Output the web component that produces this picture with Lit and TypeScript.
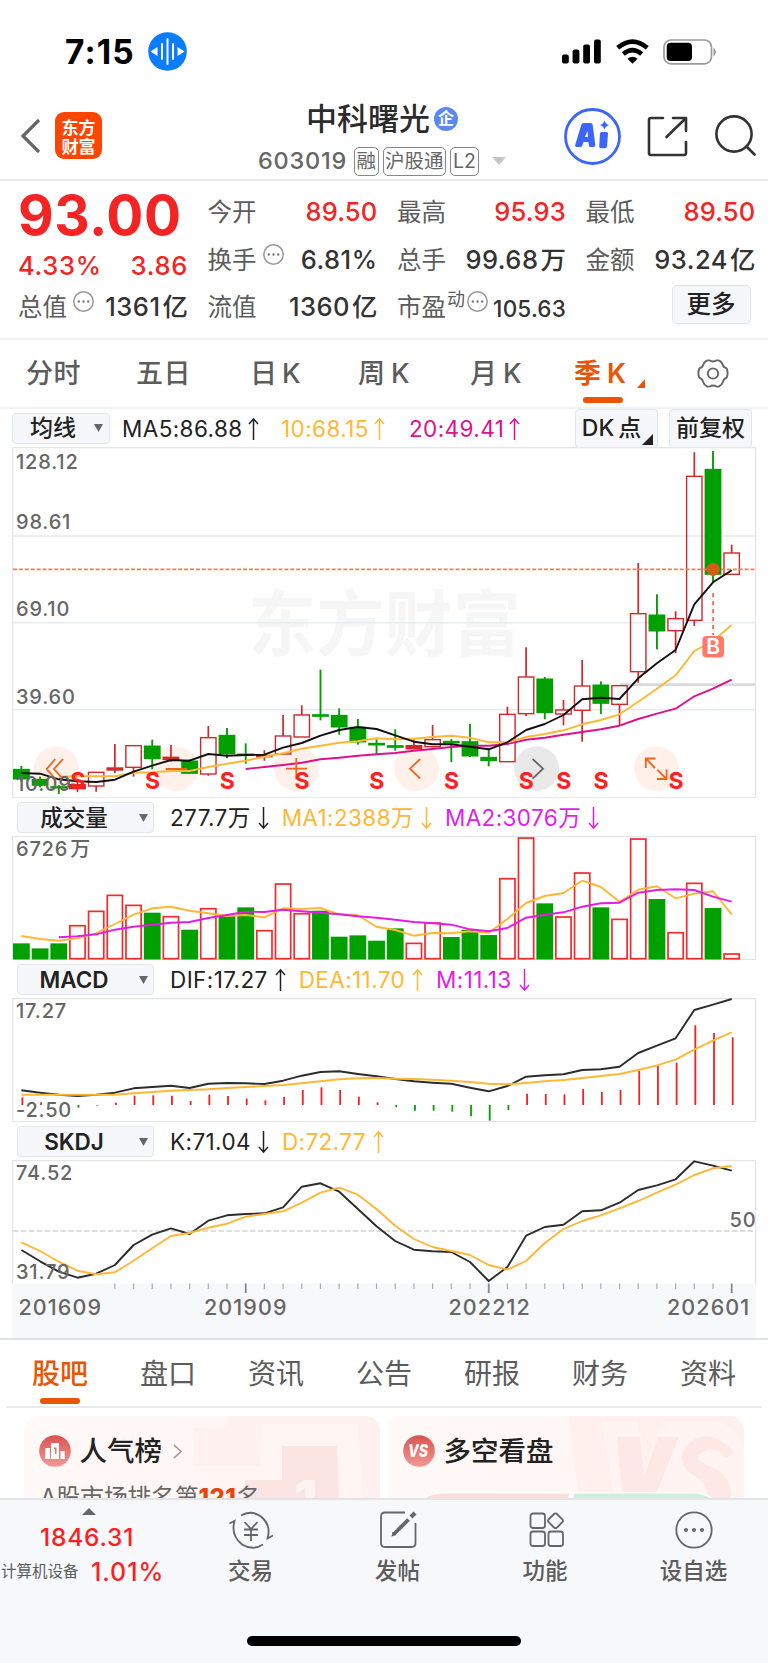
import { LitElement, html, svg, css } from "lit";
import { customElement, property } from "lit/decorators.js";

const RED = "#d2282d";
const GREEN = "#00a000";
const X0 = 21.4;
const STEP = 18.692;
const xAt = (i: number) => X0 + STEP * i;

/* Turns samples (in third-pixels below `base`) into polyline points. */
const line = (vals: number[], base: number, start = 0) =>
  vals.map((v, k) => `${xAt(k + start).toFixed(1)},${(base + v / 3).toFixed(1)}`).join(" ");

type Candle = [number, number, number, number, number];
/* up?, high, body top, body bottom, low */
const CANDLES: Candle[] = [
  [0, 978, 988, 1017, 1025], [0, 1010, 1018, 1036, 1042], [0, 1035, 1040, 1044, 1062],
  [1, 1020, 1034, 1046, 1057], [1, 996, 997, 1038, 1055], [1, 912, 984, 990, 1000],
  [1, 917, 917, 982, 1010], [0, 899, 918, 956, 988], [1, 915, 952, 958, 965],
  [0, 958, 963, 1000, 1000], [1, 858, 893, 1002, 1007], [0, 864, 886, 941, 955],
  [0, 910, 942, 946, 971], [1, 931, 946, 950, 962], [1, 825, 888, 942, 942],
  [1, 796, 825, 891, 891], [0, 689, 824, 829, 841], [0, 805, 826, 861, 884],
  [0, 837, 862, 906, 914], [0, 898, 910, 915, 943], [0, 868, 917, 922, 932],
  [1, 897, 917, 926, 928], [1, 855, 899, 920, 922], [0, 897, 904, 909, 966],
  [0, 852, 905, 948, 951], [0, 925, 952, 962, 979], [1, 800, 823, 965, 965],
  [1, 622, 711, 821, 828], [0, 711, 717, 818, 838], [1, 780, 810, 822, 856],
  [1, 660, 738, 811, 905], [0, 724, 735, 790, 822], [1, 737, 737, 793, 856],
  [1, 369, 521, 695, 728], [0, 463, 525, 573, 628], [1, 514, 536, 572, 640],
  [1, 37, 109, 541, 558], [0, 33, 88, 403, 428], [1, 314, 339, 403, 403],
];
const MA5 = [999, 1001, 1018, 1024, 1026, 1019, 995, 977, 960, 962, 942, 947, 945, 944, 923, 909, 887, 870, 861, 867, 886, 905, 913, 913, 920, 928, 907, 870, 852, 825, 778, 773, 777, 715, 670, 630, 493, 427, 391];
const MA10 = [1010, 1009, 1009, 1009, 998, 997, 993, 993, 981, 971, 962, 950, 940, 926, 917, 908, 904, 895, 898, 896, 891, 887, 893, 907, 907, 891, 882, 871, 853, 840, 823, 785, 746, 706, 633, 603, 555];
const MA20 = [987, 981, 975, 968, 958, 953, 947, 943, 939, 932, 927, 921, 917, 917, 912, 899, 893, 884, 876, 868, 857, 837, 821, 806, 769, 746, 719];
const VOL = [431, 446, 431, 375, 332, 284, 314, 339, 348, 390, 324, 348, 323, 390, 250, 339, 333, 411, 407, 423, 386, 428, 367, 412, 390, 406, 234, 112, 311, 349, 217, 323, 356, 115, 298, 396, 248, 325, 460];
const VOL_UP = new Set([3, 4, 5, 6, 8, 10, 13, 14, 15, 21, 22, 26, 27, 29, 30, 32, 33, 35, 36, 38]);
const VMA1 = [408, 417, 422, 415, 400, 372, 344, 325, 320, 332, 340, 348, 345, 352, 325, 327, 324, 343, 346, 380, 390, 407, 399, 400, 394, 398, 357, 309, 288, 279, 242, 261, 305, 269, 259, 295, 281, 274, 343];
const VMA2 = [412, 409, 403, 389, 380, 374, 368, 366, 354, 345, 335, 336, 329, 334, 338, 343, 349, 353, 359, 366, 370, 374, 388, 394, 384, 353, 344, 337, 320, 310, 308, 278, 270, 268, 270, 290, 305];
const DIF = [871, 878, 884, 888, 884, 878, 865, 861, 857, 864, 851, 849, 850, 852, 842, 827, 816, 814, 822, 829, 837, 844, 848, 851, 863, 874, 858, 830, 826, 823, 810, 808, 800, 759, 737, 715, 630, 614, 597];
const DEA = [884, 884, 884, 884, 884, 884, 880, 876, 872, 870, 868, 864, 861, 858, 855, 850, 844, 838, 835, 834, 836, 837, 839, 842, 846, 851, 853, 849, 844, 840, 834, 828, 822, 810, 796, 779, 749, 722, 697];
const HIST = [892, 907, 915, 923, 917, 908, 887, 886, 887, 903, 884, 888, 896, 901, 891, 870, 862, 870, 890, 907, 922, 932, 932, 935, 949, 962, 930, 881, 882, 883, 867, 876, 870, 812, 797, 788, 676, 699, 712];
const SK = [390, 424, 455, 473, 461, 435, 375, 344, 325, 342, 302, 286, 282, 280, 262, 200, 190, 215, 267, 319, 363, 389, 394, 396, 426, 483, 441, 347, 321, 314, 274, 271, 248, 210, 196, 178, 124, 137, 152];
const SD = [367, 393, 425, 452, 463, 457, 422, 385, 348, 339, 323, 311, 290, 282, 274, 248, 218, 203, 224, 267, 317, 357, 381, 393, 405, 435, 449, 423, 369, 327, 303, 286, 265, 243, 218, 194, 165, 145, 138];

const FONT = css`
  :host {
    font-family: Inter, "Noto Sans CJK SC", sans-serif;
  }
`;

const chartCss = css`
  :host { display: block; }
  svg { display: block; }
  .axis { font-size: 20px; font-weight: 500; fill: #666; letter-spacing: 0.8px; }
  .date { font-size: 21.5px; font-weight: 500; fill: #666; letter-spacing: 1.1px; }
  .mark { font-size: 23px; font-weight: 700; fill: #ff2020; text-anchor: middle; }
  .buy { font-size: 21px; font-weight: 600; fill: #fff; text-anchor: middle; }
  .water { font-size: 72px; font-weight: 700; fill: #f6f6f6; }
  .ln { fill: none; stroke-width: 1.9; stroke-linejoin: round; }
  .black { stroke: #111; }
  .dark { stroke: #2c2c2c; }
  .gold { stroke: #ffb735; }
  .pink { stroke: #e0108c; }
  .mag { stroke: #e11ee6; }
  .frame { fill: none; stroke: #e3e5e8; stroke-width: 1.3; }
  .grid { stroke: #e8ebf0; stroke-width: 1.6; }
  .ico { fill: none; stroke: #f0641e; stroke-width: 1.8; }
  .gray { stroke: #666; }
`;

@customElement("price-chart")
class PriceChart extends LitElement {
  static styles = [FONT, chartCss];
  render() {
    const y = (v: number) => 440 + v / 3;
    const marks = [3, 7, 11, 15, 19, 23, 27, 29, 31, 35];
    return html`<svg width="768" height="351" viewBox="0 447 768 351">
      <rect class="frame" x="12.6" y="447.6" width="743" height="350.2"></rect>
      <text class="water" x="248" y="650" textLength="273" lengthAdjust="spacingAndGlyphs">东方财富</text>
      <path class="grid" d="M13 536H755M13 622.7H755M13 709.7H755"></path>
      <path d="M620 684.6H755" stroke="#d6dae0" stroke-width="2.6"></path>
      ${[56.3, 175.3, 296.3, 416.5, 656.5].map(cx => svg`<circle cx=${cx} cy="768.6" r="22.4" fill="#fff0e9"></circle>`)}
      <circle cx="536.6" cy="768.6" r="22.4" fill="#e9e9e9"></circle>
      ${CANDLES.map(([up, h, t, b, l], i) => {
        const x = xAt(i), c = up ? RED : GREEN;
        return up
          ? svg`<path d="M${x} ${y(h)}V${y(t)}M${x} ${y(b)}V${y(l)}" stroke=${c} stroke-width="1.7"></path>
             <rect x=${x - 7.7} y=${y(t)} width="15.4" height=${(b - t) / 3} fill=${b - t < 14 && i !== 29 ? c : "none"} stroke=${c} stroke-width="1.4"></rect>`
          : svg`<path d="M${x} ${y(h)}V${y(l)}" stroke=${c} stroke-width="1.9"></path>
             <rect x=${x - 8.4} y=${y(t) - 0.5} width="16.8" height=${(b - t) / 3 + 1} fill=${c}></rect>`;
      })}
      <path d="M13 569.3H755" stroke="#f08146" stroke-width="1.8" stroke-dasharray="4 1.9"></path>
      <polyline class="ln pink" points=${line(MA20, 440, 12)}></polyline>
      <polyline class="ln gold" points=${line(MA10, 440, 2)}></polyline>
      <polyline class="ln black" points=${line(MA5, 440)}></polyline>
      <path class="ico" d="M55.3 759L46.7 769L55.3 779M63 759L54 769L63 779M165.7 769H187M286 768.6H307M296.3 758V779.5M420.3 759L410 768.7L420.3 778.7M655 768L645.8 758.5M645.8 768V758.5H655.5M657.3 769.7L666.5 779M657 779H666.6V769.5"></path>
      <path class="ico gray" d="M532.6 759L543 768.7L532.6 778.7"></path>
      <circle cx="713.1" cy="569.3" r="6.6" fill="#cf5f18"></circle>
      <path d="M713.1 593V635" stroke="#ff6a58" stroke-width="1.8" stroke-dasharray="4.2 3.8"></path>
      <rect x="702.4" y="636" width="21.6" height="21.6" rx="4" fill="#ff7b68"></rect>
      <text class="buy" x="713.2" y="654.3">B</text>
      <text class="axis" x="16" y="469">128.12</text>
      <text class="axis" x="16" y="528.6">98.61</text>
      <text class="axis" x="16" y="616.3">69.10</text>
      <text class="axis" x="16" y="704">39.60</text>
      <text class="axis" x="16" y="791">10.09</text>
      ${marks.map(i => svg`<text class="mark" x=${xAt(i) + 0.3} y="788.8">S</text>`)}
    </svg>`;
  }
}

@customElement("volume-chart")
class VolumeChart extends LitElement {
  static styles = [FONT, chartCss];
  render() {
    return html`<svg width="768" height="124" viewBox="0 836 768 124">
      <rect class="frame" x="12.6" y="836.5" width="743" height="123"></rect>
      <text class="axis" x="16" y="856">6726<tspan dx="2">万</tspan></text>
      ${VOL.map((v, i) => {
        const y = 800 + v / 3, x = xAt(i);
        return VOL_UP.has(i)
          ? svg`<rect x=${x - 7.6} y=${y + 0.7} width="15.2" height=${958.7 - y - 0.7} fill="none" stroke="#f52a2a" stroke-width="1.7"></rect>`
          : svg`<rect x=${x - 8.4} y=${y - 0.3} width="16.8" height=${959.8 - y} fill=${GREEN}></rect>`;
      })}
      <polyline class="ln gold" points=${line(VMA1, 800)}></polyline>
      <polyline class="ln mag" points=${line(VMA2, 800, 2)}></polyline>
    </svg>`;
  }
}

@customElement("macd-chart")
class MacdChart extends LitElement {
  static styles = [FONT, chartCss];
  render() {
    return html`<svg width="768" height="124" viewBox="0 998 768 124">
      <rect class="frame" x="12.6" y="998.6" width="743" height="123"></rect>
      ${HIST.map((v, i) => svg`<path d="M${xAt(i) + 1} 1105V${800 + v / 3}" stroke=${v > 915 ? GREEN : "#f52020"} stroke-width="1.8"></path>`)}
      <polyline class="ln dark" points=${line(DIF, 800)}></polyline>
      <polyline class="ln gold" points=${line(DEA, 800)}></polyline>
      <text class="axis" x="16" y="1018">17.27</text>
      <text class="axis" x="16" y="1117">-2.50</text>
    </svg>`;
  }
}

@customElement("skdj-chart")
class SkdjChart extends LitElement {
  static styles = [FONT, chartCss];
  render() {
    const ticks = Array.from({ length: 34 }, (_, k) => k + 5);
    return html`<svg width="768" height="178" viewBox="0 1160 768 178">
      <rect x="12" y="1283.5" width="744" height="55" fill="#f7f8fa"></rect>
      <path class="frame" d="M12.6 1283.5V1160.6H755.6V1283.5"></path>
      <path d="M13 1231H755" stroke="#d4d4d4" stroke-width="1.7" stroke-dasharray="5.5 2.4"></path>
      <polyline class="ln dark" points=${line(SK, 1120)}></polyline>
      <polyline class="ln gold" points=${line(SD, 1120)}></polyline>
      ${ticks.map(i => {
        const big = i === 12 || i === 25 || i === 38;
        return svg`<path d="M${xAt(i)} 1283.5V${big ? 1293 : 1289}" stroke=${big ? "#888" : "#aaa"} stroke-width=${big ? 1.8 : 1.2}></path>`;
      })}
      <text class="axis" x="16" y="1180">74.52</text>
      <text class="axis" x="16" y="1279">31.79</text>
      <text class="axis" x="729.5" y="1226.5">50</text>
      <text class="date" x="18.5" y="1314.5">201609</text>
      <text class="date" x="204" y="1314.5">201909</text>
      <text class="date" x="448.5" y="1314.5">202212</text>
      <text class="date" x="667" y="1314.5">202601</text>
    </svg>`;
  }
}

/* Selector button of an indicator with its coloured readings. */
@customElement("indicator-head")
class IndicatorHead extends LitElement {
  @property() name = "";
  @property({ attribute: false }) items: [string, string, string][] = [];
  static styles = [FONT, css`
    :host { display: flex; align-items: center; height: 38px; padding: 1px 0 0 17px; box-sizing: border-box; }
    .btn { display: grid; grid-template-columns: 112px 1fr; align-items: center; width: 137px; height: 31px; box-sizing: border-box;
      border: 1.5px solid #e2e5ea; border-radius: 4px; background: #f6f7fa; color: #222; font-size: 22.5px; font-weight: 600;
      line-height: 28px; padding-right: 5px; }
    .btn svg { justify-self: end; }
    .name { text-align: center; }
    .cjk { font-weight: 500; }
    .vals { display: flex; padding-left: 16px; gap: 13px; font-size: 22.5px; line-height: 30px; letter-spacing: 0.4px; }
    .v { display: flex; align-items: center; white-space: pre; }
    .v svg { margin-left: 7px; }
    .k { color: #222; } .g { color: #ffb735; } .m { color: #e11ee6; }
  `];
  render() {
    return html`<div class="btn"><span class=${this.name > "~" ? "name cjk" : "name"}>${this.name}</span>
        <svg width="9" height="8"><path d="M0 0H9L4.5 8Z" fill="#666"></path></svg></div>
      <div class="vals">${this.items.map(([c, t, d]) => html`<span class="v ${c}">${t}${arrow(d)}</span>`)}</div>`;
  }
}

const arrow = (d: string) => html`<svg width="11" height="24" viewBox="0 0 11 24" fill="none" stroke="currentColor" stroke-width="1.5">
  <path d=${d === "u" ? "M5.5 23V2M1 7L5.5 1.8L10 7" : "M5.5 1V22M1 17L5.5 22.2L10 17"}></path></svg>`;

const dots = html`<svg class="dots" width="21" height="21" viewBox="0 0 21 21"><circle cx="10.5" cy="10.5" r="9.7" fill="none" stroke="#999" stroke-width="1.5"></circle>
  <path d="M5.8 10.5h.01M10.5 10.5h.01M15.2 10.5h.01" stroke="#777" stroke-width="2.4" stroke-linecap="round"></path></svg>`;

@customElement("app-root")
class AppRoot extends LitElement {
  static styles = [FONT, css`
    :host { display: block; width: 768px; height: 1663px; overflow: hidden; background: #fff; color: #333; }
    * { box-sizing: border-box; }
    svg { display: block; flex: none; }
    .status { display: flex; height: 90px; padding: 13px 51px 0 65px; align-items: center; justify-content: space-between; }
    .clock { display: flex; align-items: center; gap: 13px; font-size: 33.5px; font-weight: 700; color: #000; letter-spacing: 1.1px; }
    .sys { display: flex; align-items: center; gap: 14.5px; }
    header { display: grid; grid-template-columns: 236px 1fr 240px; height: 91px; border-bottom: 2px solid #e9e9e9; }
    .left { display: flex; align-items: center; padding: 2px 0 0 20px; gap: 14px; }
    .logo { display: grid; place-content: center; width: 47px; height: 47px; border-radius: 9px; background: #ff4600; color: #fff;
      font-family: "Noto Sans CJK SC", sans-serif; font-size: 17px; font-weight: 700; line-height: 19px; text-align: center; }
    .mid { display: flex; flex-direction: column; align-items: center; padding-top: 10px; }
    .name { display: flex; align-items: center; gap: 4px; font-size: 31px; line-height: 38px; font-weight: 500; color: #2b2b2b; }
    .qi { width: 24px; height: 24px; border-radius: 50%; background: #5b8aec; color: #fff; font-size: 16px; line-height: 23px; text-align: center; font-weight: 700; }
    .code { display: flex; align-items: center; gap: 4px; font-size: 23.5px; line-height: 30px; margin-top: 8px; color: #666; font-weight: 500; }
    .num { margin-right: 3px; letter-spacing: 0.75px; }
    .tag { border: 1.5px solid #888; border-radius: 5px; height: 29px; line-height: 26px; padding: 0 1.500px; font-size: 19.500px; font-weight: 400; }
    .tag.l2 { padding: 0 2px; }
    .code svg { margin-left: 9px; }
    .right { display: flex; align-items: center; justify-content: flex-end; padding: 3px 12px 0 0; gap: 26px; }
    .quote { display: grid; grid-template-columns: 170px 170px 169px 170px; column-gap: 19.5px; height: 159px; padding: 7.5px 0 0 18px;
      border-bottom: 2px solid #f1f1f3; }
    .qcol { display: grid; grid-template-rows: 47.5px 47.5px 47.5px; }
    .qcol.first { grid-template-rows: 53px 42px 47.5px; }
    .cell { display: flex; align-items: center; justify-content: space-between; font-size: 25.5px; line-height: 32px; font-weight: 500; color: #333; white-space: nowrap; letter-spacing: 0.5px; }
    .cell .l { display: flex; font-size: 24.5px; font-weight: 400; color: #5c5c5c; letter-spacing: 0; }
    .dots { margin: 0 0 0 6px; }
    .cell.red, .pct { color: #f42424; }
    .cell.red { letter-spacing: 0.2px; }
    .cell .l .sup { font-size: 18px; line-height: 18px; margin-left: 1px; }
    .sup + .dots { margin-left: 2px; margin-top: 0; }
    .cell.small { font-size: 22.5px; letter-spacing: 0.2px; }
    .cell.small b { font-weight: 500; padding-top: 4px; }
    .cell .u { margin-left: 2px; letter-spacing: 0; }
    .price { font-size: 55px; line-height: 53px; font-weight: 700; color: #f42424; letter-spacing: 0.5px; }
    .pct { display: flex; justify-content: space-between; font-size: 25.5px; line-height: 32px; padding-top: 8px; font-weight: 500; letter-spacing: 0.7px; }
    .more { justify-self: end; align-self: center; width: 79px; height: 39px; margin: -6px 5px 0 0; border: 1.5px solid #dfe2e8; border-radius: 5px; background: #f6f7fa;
      text-align: center; font-size: 24.5px; line-height: 36px; font-weight: 500; color: #222; }
    .tabs { display: flex; height: 69px; border-bottom: 2px solid #f1f1f3; padding-left: 26px; font-size: 27px; line-height: 68px; color: #5c5c5c; font-weight: 500; }
    .tabs > span { flex: none; width: 110px; white-space: nowrap; letter-spacing: 0.5px; }
    .tabs > .d { width: 112px; padding-left: 4px; }
    .tabs .K { margin-left: 5.500px; }
    .tabs .d .K { margin-left: 4.500px; }
    .tabs .w { width: 112px; }
    .tabs .mo { width: 104px; }
    .on { color: #ea5504; font-weight: 600; position: relative; }
    .bar { position: absolute; left: 9px; bottom: 4px; width: 40px; height: 6px; border-radius: 3px; background: #ea5504; }
    .tri { position: absolute; left: 63px; top: 39px; }
    .gear { margin: 18px 0 0 13px; }
    .ma { display: flex; height: 38px; align-items: center; padding-left: 12px; font-size: 22.5px; line-height: 30px; }
    .ma > * { flex: none; }
    .mabtn { display: flex; align-items: center; justify-content: space-between; width: 98px; height: 31px; border: 1.5px solid #e2e5ea; border-radius: 4px; background: #f6f7fa;
      padding: 0 6px 0 17px; font-size: 23px; line-height: 28px; font-weight: 500; color: #222; }
    .mv { display: flex; align-items: center; color: #222; letter-spacing: 0.4px; padding-top: 1px; }
    .mv svg { margin-left: 5px; }
    .mv.a { width: 171px; padding-left: 12px; } .mv.b { width: 128px; color: #ffb735; } .mv.c { width: 166px; color: #e0108c; }
    .box { position: relative; width: 83px; height: 39px; border: 1.5px solid #e2e5ea; border-radius: 4px; background: #f6f7fa; text-align: center; font-size: 23px; line-height: 37px; font-weight: 500; color: #222; margin-right: 11px; white-space: nowrap; }
    .box svg { position: absolute; right: 4px; bottom: 2px; }
    .dk { padding-right: 10px; }
    .dk i { font-style: normal; margin-left: 4px; }
    .tabs2 { display: flex; height: 68px; margin: 0 6px; padding: 0 0 0 26px; border-bottom: 2px solid #e9eaec; font-size: 28px; line-height: 69px; color: #5c5c5c; }
    .tabs2 > span { flex: none; width: 108px; }
    .tabs2 .on { font-weight: 500; }
    .tabs2 .bar { left: 8px; bottom: 2px; }
    .rule { height: 2px; background: #dde0e5; }
    .cards { display: grid; grid-template-columns: 356px 356px; gap: 8px; padding: 8px 24px 0; height: 90px; overflow: hidden; }
    .card { display: grid; overflow: hidden; height: 100px; border-radius: 15px 15px 0 0; background: linear-gradient(100deg, #fff9f7, #fff4f2); }
    .card > * { grid-area: 1 / 1; }
    .cc { display: flex; flex-direction: column; padding: 18px 15px; }
    .ct { display: flex; align-items: center; gap: 8.500px; font-size: 27.5px; line-height: 34px; font-weight: 500; color: #222; }
    .ct .chev { margin-left: 2px; }
    .sub { font-size: 24px; line-height: 30px; margin: 15px 0 0 1px; color: #666; white-space: nowrap; letter-spacing: -0.3px; }
    .sub b { color: #e8420e; font-weight: 800; letter-spacing: 0.500px; }
    .vs { font-size: 17px; font-weight: 800; font-style: italic; fill: #fff; text-anchor: middle; }
    .one { font-size: 54px; font-weight: 800; fill: #fff4f2; }
    nav { display: grid; grid-template: 114px 1fr / 177px 147px 147px 148px 149px; height: 165px; border-top: 2px solid #e2e4e7; background: #f7f8fa; color: #5c5c5c; }
    .it { display: flex; flex-direction: column; align-items: center; padding-top: 11px; gap: 6px; font-size: 22.5px; line-height: 32px; font-weight: 500; }
    .it .fn { margin-left: 3px; }
    .idx { color: #ff1e1e; font-size: 24.5px; line-height: 30px; font-weight: 500; padding: 7px 0 0 40px; letter-spacing: 0.8px; }
    .up { margin: 8px 0 0 82px; }
    .sec { display: flex; align-items: center; gap: 12.500px; font-size: 15.5px; line-height: 30px; padding-left: 1px; margin-top: 5px; white-space: nowrap; }
    .sec b { color: #ff1e1e; font-size: 25px; font-weight: 500; letter-spacing: 0.9px; }
    .home { grid-column: 1 / -1; justify-self: center; width: 274px; height: 10px; border-radius: 5px; background: #000; margin-top: 22px; }
  `];

  render() {
    return html`
      <div class="status">
        <div class="clock">7:15
          <svg width="39" height="39" viewBox="0 0 39 39"><circle cx="19.5" cy="19.5" r="19.3" fill="#0a7cff"></circle>
            <path d="M19.5 7V32M14 12V27M25 12V27" stroke="#fff" stroke-width="2" stroke-linecap="round"></path>
            <path d="M2.5 19.5L9.5 15V24ZM36.5 19.5L29.5 15V24Z" fill="#fff"></path></svg>
        </div>
        <div class="sys">
          <svg width="39" height="25" viewBox="0 0 39 25"><rect y="15.5" width="6.8" height="9" rx="2"></rect><rect x="10.6" y="10.5" width="6.8" height="14" rx="2"></rect><rect x="21.2" y="5.5" width="6.8" height="19" rx="2"></rect><rect x="32" y="0.5" width="6.8" height="24" rx="2"></rect></svg>
          <svg width="33" height="25" viewBox="0 0 33 25" fill="none" stroke="#000" stroke-width="4.6"><path d="M1.7 8.8Q16.5 -3.7 31.3 8.8M7.3 15Q16.5 7.2 25.7 15"></path><path d="M16.5 24.8L11.5 19.8Q16.5 15.8 21.5 19.8Z" fill="#000" stroke="none"></path></svg>
          <svg width="54" height="26" viewBox="0 0 54 26"><rect x="1" y="1" width="47.5" height="23.8" rx="7" fill="none" stroke="#9b9b9b" stroke-width="1.7"></rect><rect x="3.7" y="3.8" width="25.3" height="18.3" rx="4"></rect><path d="M51 9.5Q54 13 51 16.5Z" fill="#9b9b9b" stroke="#9b9b9b"></path></svg>
        </div>
      </div>

      <header>
        <div class="left">
          <svg width="21" height="36" viewBox="0 0 21 36"><path d="M19 2L3 18L19 34" fill="none" stroke="#666" stroke-width="3.2"></path></svg>
          <div class="logo"><span>东方</span><span>财富</span></div>
        </div>
        <div class="mid">
          <div class="name">中科曙光<span class="qi">企</span></div>
          <div class="code"><span class="num">603019</span><span class="tag">融</span><span class="tag">沪股通</span><span class="tag l2">L2</span>
            <svg width="14" height="8"><path d="M0 0H14L7 8Z" fill="#c6c6c6"></path></svg></div>
        </div>
        <div class="right">
          <svg width="57" height="57" viewBox="0 0 57 57"><circle cx="28.5" cy="28.5" r="27" fill="none" stroke="#3a66ff" stroke-width="2.8"></circle>
            <g fill="#3a66ff"><path fill-rule="evenodd" d="M19.5 15H26.5Q28.5 15 28.7 17L31.3 37Q31.5 39 29.5 39H26.5Q25 39 24.8 37.3L24.5 34H19.5L18.3 37.5Q17.8 39 16 39H13Q10.5 39 11.3 36.5L17.3 16.8Q17.9 15 19.5 15ZM21 29H24L23.5 23Z"></path>
            <path d="M37.5 24H42.5Q44 24 44 25.5L43 38.5Q42.8 40.3 41 40.3H37Q35 40.3 35.2 38.5L36 25.5Q36 24 37.5 24ZM40.5 12.500Q41.500 16 45 17Q41.500 18 40.500 21.500Q39.500 18 36 17Q39.500 16 40.500 12.500Z"></path></g></svg>
          <svg width="41" height="41" viewBox="0 0 41 41" fill="none" stroke="#333" stroke-width="2.6" stroke-linecap="round" stroke-linejoin="round"><path d="M16 2H4Q2 2 2 4V37Q2 39 4 39H37Q39 39 39 37V26M26 2H39V15M38.5 2.5L19.5 21"></path></svg>
          <svg width="42" height="42" viewBox="0 0 42 42" fill="none" stroke="#333" stroke-width="2.6" stroke-linecap="round"><circle cx="20" cy="19" r="17.6"></circle><path d="M33 32L40.5 39.5"></path></svg>
        </div>
      </header>

      <section class="quote">
        <div class="qcol first">
          <div class="price">93.00</div>
          <div class="pct"><span>4.33%</span><span>3.86</span></div>
          <div class="cell"><span class="l">总值${dots}</span><span>1361<span class="u">亿</span></span></div>
        </div>
        <div class="qcol">
          <div class="cell red"><span class="l">今开</span>89.50</div>
          <div class="cell"><span class="l">换手${dots}</span>6.81%</div>
          <div class="cell"><span class="l">流值</span><span>1360<span class="u">亿</span></span></div>
        </div>
        <div class="qcol">
          <div class="cell red"><span class="l">最高</span>95.93</div>
          <div class="cell"><span class="l">总手</span><span>99.68<span class="u">万</span></span></div>
          <div class="cell small"><span class="l">市盈<span class="sup">动</span>${dots}</span><b>105.63</b></div>
        </div>
        <div class="qcol">
          <div class="cell red"><span class="l">最低</span>89.50</div>
          <div class="cell"><span class="l">金额</span><span>93.24<span class="u">亿</span></span></div>
          <div class="more">更多</div>
        </div>
      </section>

      <div class="tabs">
        <span>分时</span><span>五日</span><span class="d">日<span class="K">K</span></span><span class="w">周<span class="K">K</span></span><span class="mo">月<span class="K">K</span></span>
        <span class="on">季<span class="K">K</span><i class="bar"></i><svg class="tri" width="8" height="9"><path d="M8 0V9H0Z" fill="#ea5504"></path></svg></span>
        <svg class="gear" width="32" height="31" viewBox="0 0 34 32" fill="none" stroke="#666" stroke-width="2" stroke-linejoin="round"><path d="M11 2H13Q17 4.5 21 2H23Q26 3 27.5 7Q28 9.5 31.5 10.500Q33.500 15.500 31.500 20.500Q28 22 27.500 25Q26.500 28.500 23 30H21Q17 27.500 13 30H11Q7.500 28.500 6.500 25Q6 22 2.500 20.500Q.5 15.500 2.500 10.500Q6 9.500 6.500 7Q8 3 11 2Z"></path><circle cx="17" cy="16" r="5.500"></circle></svg>
      </div>

      <div class="ma">
        <div class="mabtn">均线<svg width="9" height="8"><path d="M0 0H9L4.5 8Z" fill="#666"></path></svg></div>
        <span class="mv a">MA5:86.88${arrow("u")}</span><span class="mv b">10:68.15${arrow("u")}</span><span class="mv c">20:49.41${arrow("u")}</span>
        <div class="box dk">DK<i>点</i><svg width="11" height="11"><path d="M11 0V11H0Z" fill="#222"></path></svg></div>
        <div class="box">前复权</div>
      </div>
      <price-chart></price-chart>
      <indicator-head .name=${"成交量"} .items=${[["k", "277.7万", "d"], ["g", "MA1:2388万", "d"], ["m", "MA2:3076万", "d"]]}></indicator-head>
      <volume-chart></volume-chart>
      <indicator-head .name=${"MACD"} .items=${[["k", "DIF:17.27", "u"], ["g", "DEA:11.70", "u"], ["m", "M:11.13", "d"]]}></indicator-head>
      <macd-chart></macd-chart>
      <indicator-head .name=${"SKDJ"} .items=${[["k", "K:71.04", "d"], ["g", "D:72.77", "u"]]}></indicator-head>
      <skdj-chart></skdj-chart>

      <div class="rule"></div>
      <div class="tabs2"><span class="on">股吧<i class="bar"></i></span><span>盘口</span><span>资讯</span><span>公告</span><span>研报</span><span>财务</span><span>资料</span></div>

      <div class="cards">
        <div class="card">
          <svg width="356" height="100" viewBox="0 0 356 100"><path d="M170 12H204V0H356V100H195V50H170Z" fill="#fff1ef"></path><path d="M238 8H334L340 100H195V50H236Z" fill="#fff5f3"></path><path d="M258 30H313L316 100H221V64H258Z" fill="#fbe5e3"></path><text class="one" x="270" y="103">1</text></svg>
          <div class="cc">
            <div class="ct"><svg width="32" height="32" viewBox="0 0 32 32"><defs><linearGradient id="a" x2="0" y2="1"><stop stop-color="#d9534f"></stop><stop offset="1" stop-color="#f09a95"></stop></linearGradient></defs><circle cx="16" cy="16" r="15.8" fill="url(#a)"></circle><path fill-rule="evenodd" fill="#fff" d="M6 24L6.5 13H11V24ZM12 24V8H20V24ZM21.5 24V16H25.5L26 24ZM15 12.5V14H16V19H17.5V12.5Z"></path></svg>人气榜
              <svg class="chev" width="9" height="15"><path d="M1 1L8 7.5L1 14" fill="none" stroke="#999" stroke-width="1.6"></path></svg></div>
            <div class="sub">A股市场排名第<b>121</b>名</div>
          </div>
        </div>
        <div class="card">
          <svg width="356" height="100" viewBox="0 0 356 100"><path d="M181 0H356V100H193Z" fill="#ffefed"></path><path d="M213 5H250L258 50L275 5H330Q356 15 356 40V100H230Z" fill="#fff4f2"></path><path d="M229 21H252L256 60L270 21H291L259 100H236Z" fill="#fde8e6"></path><path d="M346 36Q320 8 298 30Q285 48 310 62Q325 72 318 100H340Q350 62 325 52Q300 42 318 34Q330 31 338 42Z" fill="#fde8e6"></path>
            <path d="M30 90Q36 76 55 76H305Q324 76 331 90Z" fill="#fff"></path><path d="M31 90Q37 77.5 55 77.5H181L179 90Z" fill="#fddcda"></path><path d="M186 77.500H304Q322 77.500 329 90H184Z" fill="#d2eedb"></path></svg>
          <div class="cc">
            <div class="ct"><svg width="32" height="32" viewBox="0 0 32 32"><defs><linearGradient id="b" x2="0" y2="1"><stop stop-color="#d9534f"></stop><stop offset="1" stop-color="#f09a95"></stop></linearGradient></defs><circle cx="16" cy="16" r="15.8" fill="url(#b)"></circle><text class="vs" x="15" y="22.3" textLength="20" lengthAdjust="spacingAndGlyphs">VS</text></svg>多空看盘</div>
          </div>
        </div>
      </div>

      <nav>
        <div>
          <svg class="up" width="14" height="7"><path d="M0 7L7 0L14 7Z" fill="#666"></path></svg>
          <div class="idx">1846.31</div>
          <div class="sec">计算机设备<b>1.01%</b></div>
        </div>
        <div class="it"><svg width="44" height="38" viewBox="0 0 44 38" fill="none" stroke="#666" stroke-width="1.8"><path d="M12 4.5Q22 -1.5 32 5.5Q42.5 14 38.5 27.500L44 24.500M34 33.500Q24 40 13 33.500Q1.500 24 5.500 10L.5 12.500M15.500 11L22 18L28.500 11M15 18.500H29M15 24H29M22 18V30"></path></svg>交易</div>
        <div class="it"><svg width="38" height="38" viewBox="0 0 38 38" fill="none" stroke="#666" stroke-width="1.8"><path d="M26 1.5H6Q2 1.5 2 5.5V32Q2 36 6 36H32.5Q36.5 36 36.5 32V12"></path><path d="M14.5 23.5L29.5 8.5" stroke-width="3.8"></path><path d="M12.5 25.5L13.5 21L17 24Z" fill="#666" stroke="none"></path><path d="M32 6L36 2" stroke-width="4"></path></svg>发帖</div>
        <div class="it"><svg class="fn" width="36" height="38" viewBox="0 0 36 38" fill="none" stroke="#666" stroke-width="1.8"><rect x="1.5" y="2.5" width="14.5" height="14.5" rx="2.5"></rect><rect x="1.5" y="20.5" width="14.5" height="14.5" rx="2.5"></rect><rect x="19.5" y="20.5" width="14.5" height="14.5" rx="2.5"></rect><path d="M25 3L19.5 8.5Q18.5 9.8 19.5 11L25 16.500Q26.500 17.800 28 16.500L33.500 11Q34.500 9.800 33.500 8.500L28 3Q26.500 1.700 25 3Z"></path></svg>功能</div>
        <div class="it"><svg width="38" height="38" viewBox="0 0 38 38"><circle cx="19" cy="19" r="17.7" fill="none" stroke="#666" stroke-width="1.8"></circle><path d="M11 19h.01M19 19h.01M27 19h.01" stroke="#666" stroke-width="4" stroke-linecap="round"></path></svg>设自选</div>
        <div class="home"></div>
      </nav>`;
  }
}
